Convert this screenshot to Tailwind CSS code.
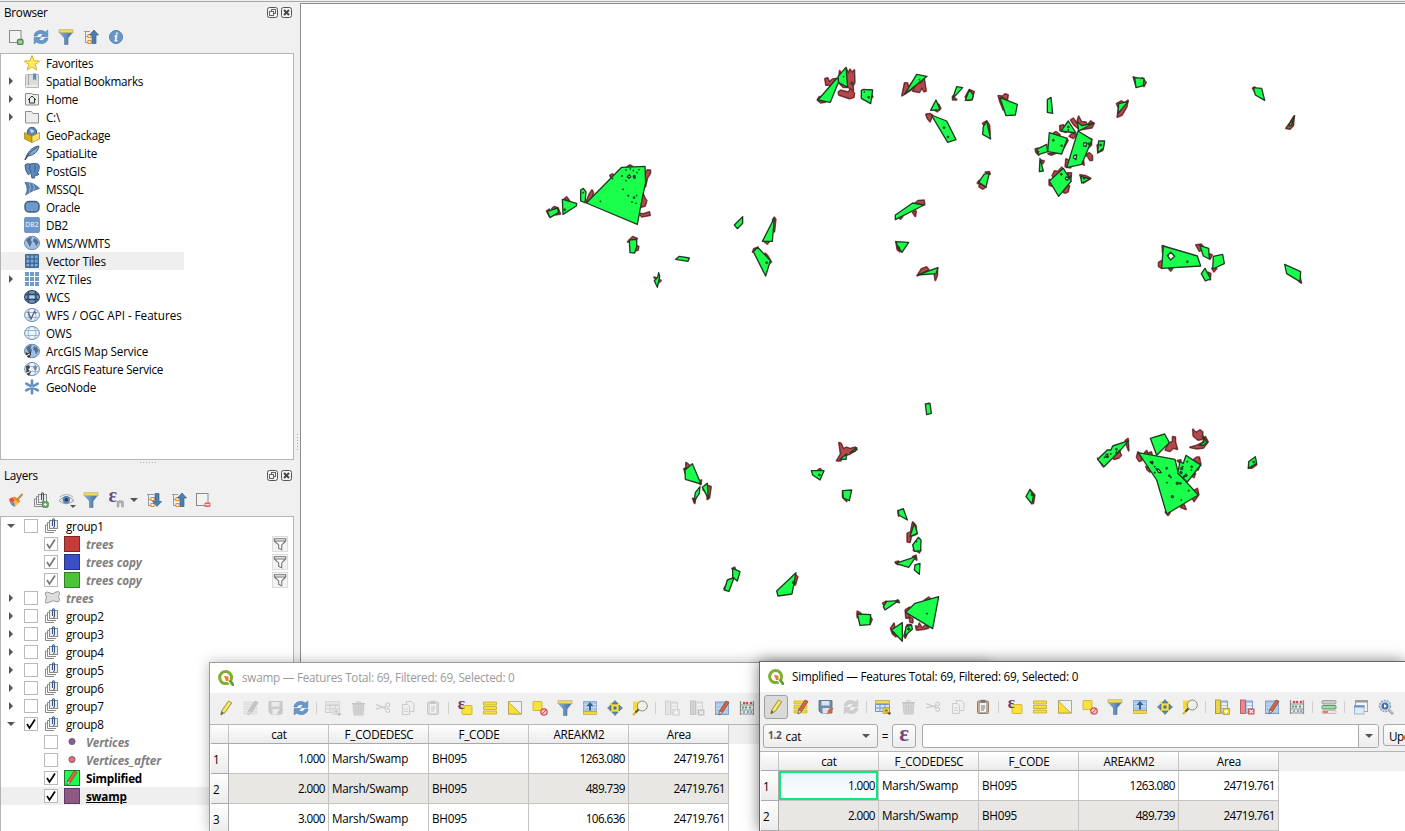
<!DOCTYPE html>
<html lang="en">
<head>
<meta charset="utf-8">
<title>Swamp layers</title>
<script src="https://cdn.jsdelivr.net/npm/@tailwindcss/browser@4"></script>
</head>
<body class="overflow-hidden bg-[#f0f0f0] text-black font-['Open_Sans','Noto_Sans',sans-serif] text-[11.7px] tracking-[-0.24px] leading-[18px]">
<svg class="absolute size-0" aria-hidden="true">
  <defs>
    <linearGradient id="gf" x1="0" x2="1"><stop offset="0" stop-color="#8db3de"/><stop offset="1" stop-color="#3c6798"/></linearGradient>
  </defs>
</svg>
<svg class="hidden" aria-hidden="true">
  <symbol id="addlayer" viewBox="0 0 16 16"><rect x="1.500" y="1.500" width="11.500" height="12" fill="#f3f3f3" stroke="#8a8a8a"/><rect x="9.500" y="10.500" width="5.500" height="5" rx="1.500" fill="#a5cda3" stroke="#4b8a4a" stroke-width="1.300"/></symbol>
  <symbol id="refresh" viewBox="0 0 16 16"><path d="M1 7C1.500 1.500 8 0 12.500 3L14.800 1v6.500H8L10.200 5.200C7.500 3.700 5 4.500 4 7Z" fill="#6697cd" stroke="#4b7db5" stroke-width=".6"/><path d="M15 9C14.500 14.500 8 16 3.500 13L1.200 15V8.500H8L5.800 10.800C8.500 12.300 11 11.500 12 9Z" fill="#6697cd" stroke="#4b7db5" stroke-width=".6"/></symbol>
  <symbol id="funnel" viewBox="0 0 16 16"><path d="M1.500 3.500h13L10 9v6.500H6.500V9Z" fill="url(#gf)" stroke="#587fa9" stroke-width=".7"/><rect x="1" y=".8" width="14" height="3" fill="#f4dc4c" stroke="#aaa06a" stroke-width=".6"/></symbol>
  <symbol id="collapse" viewBox="0 0 16 16"><path d="M1 2.500h6M2.500 2.500V14M2.500 7.500H5M2.500 13.500H5" stroke="#999" fill="none"/><rect x="5" y="5.500" width="3" height="3" fill="#fff" stroke="#f08a1c"/><rect x="5" y="11.500" width="3" height="3" fill="#fff" stroke="#f08a1c"/><path d="M11 1l4.500 5H13v8.500H9V6H6.500Z" fill="#4d7eb3" stroke="#365f8d" stroke-width=".7"/></symbol>
  <symbol id="expand" viewBox="0 0 16 16"><path d="M1 2.500h7M2.500 2.500V14M2.500 7.500H5M2.500 13.500H5" stroke="#999" fill="none"/><rect x="5" y="5.500" width="3" height="3" fill="#fff" stroke="#f08a1c"/><rect x="5" y="11.500" width="3" height="3" fill="#fff" stroke="#f08a1c"/><path d="M11 14.500l4.500-5H13V1.500H9v8H6.500Z" fill="#4d7eb3" stroke="#365f8d" stroke-width=".7"/></symbol>
  <symbol id="info" viewBox="0 0 16 16"><circle cx="8" cy="8" r="6.500" fill="#6b96c8" stroke="#4f7fb5"/><path d="M8.900 3.600v1.800M6.600 7h1.900l-1 4.800h1.900" stroke="#fff" stroke-width="1.600" fill="none"/></symbol>
  <symbol id="float" viewBox="0 0 11 11"><rect x=".5" y=".5" width="10" height="10" rx="2" fill="#f4f4f4" stroke="#555"/><rect x="4.500" y="2.500" width="4" height="4" fill="none" stroke="#666"/><rect x="2.500" y="4.500" width="4" height="4" fill="#f4f4f4" stroke="#666"/></symbol>
  <symbol id="close" viewBox="0 0 11 11"><rect x=".5" y=".5" width="10" height="10" rx="2" fill="#f4f4f4" stroke="#555"/><path d="M3 3l5 5M8 3l-5 5" stroke="#444" stroke-width="1.900"/></symbol>

  <symbol id="star" viewBox="0 0 16 16"><path d="M8 .5l2 5.300 5.700.2-4.500 3.500 1.600 5.600L8 11.900l-4.800 3.200 1.600-5.600L.300 6 6 5.800Z" fill="#fdec60" stroke="#d2ab20" stroke-width=".9"/></symbol>
  <symbol id="book" viewBox="0 0 16 16"><path d="M1.500 2.500q0-1 1-1h12v13h-12q-1 0-1-1Z" fill="#dcdcdc" stroke="#b4b4b4"/><path d="M4.500 1.500v11" stroke="#aaa"/><path d="M2 13h12" stroke="#fff"/><path d="M9 .5h3.200v7L10.600 6 9 7.500Z" fill="#5b8cc2"/></symbol>
  <symbol id="folder" viewBox="0 0 16 16"><path d="M1.500 13.500v-11h6l1.500 2h5.500v9.500h-13Z" fill="#ededed" stroke="#8c8c8c"/></symbol>
  <symbol id="home" viewBox="0 0 16 16"><path d="M1.500 13.500v-11h6l1.500 1h5.500v10.500h-13Z" fill="#ededed" stroke="#8c8c8c"/><path d="M4 9l4-4 4 4M5.500 8v4h5V8" fill="none" stroke="#333"/></symbol>
  <symbol id="gpkg" viewBox="0 0 16 16"><circle cx="8" cy="5" r="4.700" fill="#5f87b6" stroke="#35577c"/><path d="M6 2l3 1 1 2-3 1Z" fill="#d0dfef"/><path d="M.500 5.500L8 9v6.500L.5 12Z" fill="#d6aa08" stroke="#8c7418" stroke-width=".6"/><path d="M15.500 5.500L8 9v6.500l7.500-3.500Z" fill="#fae56a" stroke="#8c7418" stroke-width=".6"/></symbol>
  <symbol id="feather" viewBox="0 0 16 16"><path d="M1 15C3 8 7 2 15 1c-1 6-5 9-11 10Z" fill="#86a9d2" stroke="#2d4a6e" stroke-width=".9"/><path d="M1 15C4 9 8 5 13 2.500" stroke="#2d4a6e" fill="none"/></symbol>
  <symbol id="postgis" viewBox="0 0 16 16"><path d="M1 2Q2.500 0 6 1q4-1.200 8 0 2.200 1.500 1 5.500-.5 3-2.500 4l2.500.5q-1.500 2-4 1.200L10.500 15H7.800L7 9.500 4.500 12Q1 8 1 2Z" fill="#5e8cbf" stroke="#36577f" stroke-width=".9"/><path d="M6.500 2q-2 4 .5 7M10.500 2q2 4-.5 7.500" stroke="#36577f" fill="none" stroke-width=".8"/></symbol>
  <symbol id="mssql" viewBox="0 0 16 16"><path d="M1 1.500Q10 1 15.500 7.500 9 9 1.500 14 5 8 1 1.500Z" fill="#5781b1" stroke="#3b608c" stroke-width=".7"/><path d="M5 2q3 4 0 10M9 3q3 4 0 7" stroke="#b8cfe8" fill="none" stroke-width=".7"/></symbol>
  <symbol id="oracle" viewBox="0 0 16 16"><rect x="1" y="2.500" width="14" height="10.500" rx="4" fill="#6e9acb" stroke="#3d5e83" stroke-width="1.500"/></symbol>
  <symbol id="db2" viewBox="0 0 16 16"><rect width="16" height="16" rx="2" fill="#6d97ca"/><text x="8" y="10" text-anchor="middle" font-size="6.500" letter-spacing="0.300" fill="#fff" font-family="Open Sans">DB2</text></symbol>
  <symbol id="globe" viewBox="0 0 16 16"><ellipse cx="8" cy="8" rx="7.500" ry="6.700" fill="#9fc0e4" stroke="#5f7d9f" stroke-width=".9"/><path d="M2 5q3-3.500 6-2.500L6.500 5 8 7l-2 5-2-3.500ZM10 3l3 1.500 1.500 3-2.500 4-1-3.500-2-1.500Z" fill="#536f90"/></symbol>
  <symbol id="vtile" viewBox="0 0 16 16"><rect x="1" y="1" width="14" height="14" rx="1" fill="#3f6895"/><path d="M2.500 2.500h2.700v2.700H2.500zM6.700 2.500h2.700v2.700H6.700zM10.900 2.500h2.700v2.700h-2.700zM2.500 6.700h2.700v2.700H2.500zM6.700 6.700h2.700v2.700H6.700zM10.900 6.700h2.700v2.700h-2.700zM2.500 10.900h2.700v2.700H2.500zM6.700 10.900h2.700v2.700H6.700zM10.900 10.900h2.700v2.700h-2.700z" fill="#80abda"/></symbol>
  <symbol id="xyz" viewBox="0 0 16 16"><path d="M1 1h4v4H1zM6 1h4v4H6zM11 1h4v4h-4zM1 6h4v4H1zM6 6h4v4H6zM11 6h4v4h-4zM1 11h4v4H1zM6 11h4v4H6zM11 11h4v4h-4z" fill="#6f9bcb"/></symbol>
  <symbol id="wcs" viewBox="0 0 16 16"><ellipse cx="8" cy="8" rx="7.500" ry="6.500" fill="#6f96c4" stroke="#31465f"/><path d="M1 5.500h14M1 10.500h14M5 2q-2 6 0 12M11 2q2 6 0 12" stroke="#31465f" stroke-width="1.300" fill="none"/><rect x="5.500" y="6.500" width="5" height="3" fill="#b6d0ee"/></symbol>
  <symbol id="ows" viewBox="0 0 16 16"><ellipse cx="8" cy="8" rx="7.400" ry="6.500" fill="#eef5fd" stroke="#6389b4"/><path d="M1 5.500h14M1 10.500h14M5.500 2q-3 6 0 12M10.500 2q3 6 0 12" stroke="#8fb1d8" fill="none" stroke-width=".9"/></symbol>
  <symbol id="wfs" viewBox="0 0 16 16"><use href="#ows"/><path d="M4 4.500L7 12l3.500-7.500 1.500 2" stroke="#5f666e" stroke-width="1.400" fill="none"/></symbol>
  <symbol id="arcmap" viewBox="0 0 16 16"><use href="#globe"/><path d="M1.500 9l3 1.500L7 8v3.500L5 15 2.500 13Z" fill="#333"/><path d="M2 13l4-2" stroke="#fff"/></symbol>
  <symbol id="arcfeat" viewBox="0 0 16 16"><use href="#ows"/><path d="M9 6l3-2 1 3-2 3Z" fill="#72859c"/><path d="M2 5l3-1 1 3-2 1 3 3-2 4-2.500-2Z" fill="#444"/><path d="M2 12.500l4-2" stroke="#fff"/></symbol>
  <symbol id="geonode" viewBox="0 0 16 16"><path d="M8 1.700v12.600M2.300 4.600l11.400 6.800M13.700 4.600L2.300 11.400" stroke="#6490c0" stroke-width="2.700" stroke-linecap="round"/><circle cx="8" cy="8" r="1" fill="#a9c5e5"/></symbol>

  <symbol id="brush" viewBox="0 0 16 16"><path d="M1 7.500l5-3 6 5-5 5.500Q2.500 13.500 1 7.500Z" fill="#f3c53a"/><path d="M1 7l4-2 1.500 4-4 2Z" fill="#e2524a"/><path d="M2.500 11l3.500-1 1 4.500q-3 0-4.500-3.500Z" fill="#5d8ad0"/><path d="M6 5.500l5.500 4.500" stroke="#e58d2c" stroke-width="2.500"/><path d="M9 8l5.500-6" stroke="#c28846" stroke-width="2"/></symbol>
  <symbol id="group" viewBox="0 0 16 16"><path d="M1.500 7v7.500H10M1.500 7H3M3.500 4.500v8H12M3.500 4.500H5" fill="none" stroke="#8a8a8a"/><rect x="5.500" y="2.500" width="8" height="8" fill="#eee" stroke="#8a8a8a"/><path d="M8.500 8V2.500q0-1.700 1-1.700t1 1.700V8q0 1.500-1.400 1.500" fill="none" stroke="#35577c" stroke-width="1.100"/></symbol>
  <symbol id="addgroup" viewBox="0 0 16 16"><use href="#group"/><rect x="9.500" y="9.800" width="5.700" height="5.500" rx="1" fill="#76ad75" stroke="#4b8a4a"/><path d="M12.300 11v3M10.800 12.500h3" stroke="#fff"/></symbol>
  <symbol id="eye" viewBox="0 0 18 16"><path d="M1 8.500Q8 1 16 8.500 8 15 1 8.500Z" fill="#eee" stroke="#999"/><path d="M2 5q6-5 13 0" fill="none" stroke="#aaa"/><circle cx="8.300" cy="7.700" r="3.700" fill="#5582b6"/><circle cx="8.300" cy="7.700" r="1.600" fill="#20374f"/><path d="M12 13h6l-3 3Z" fill="#555"/></symbol>
  <symbol id="epsf" viewBox="0 0 16 16"><text x="-.5" y="9.500" font-size="20" font-weight="bold" fill="#704c7d" font-family="Liberation Serif">ε</text><path d="M8 9.500q3.200-2 6.500 0V15h-2v-4h-2.500v4H8Z" fill="#b0b0b0" stroke="#999" stroke-width=".5"/></symbol>
  <symbol id="removelayer" viewBox="0 0 16 16"><rect x="1.500" y="1.500" width="11.500" height="12" fill="#f3f3f3" stroke="#8a8a8a"/><rect x="9.500" y="10.500" width="6" height="4.500" rx="1" fill="#ee5c61"/><path d="M10.500 12.700h4" stroke="#fff" stroke-width="1.200"/></symbol>
  <symbol id="poly" viewBox="0 0 16 16"><path d="M1 3q2-2 5 0t6-1q3-1 3.500.5 0 2-1 4l1 3.500q-1 3-3.500 1.500t-5 0-5 1.500q-1.500-1-.500-2.500l1-3.500Z" fill="#ddd" stroke="#999"/></symbol>
  <symbol id="gfilter" viewBox="0 0 16 16"><path d="M1.500 2h13v2.500L10 9v5.500l-3.500-1.500V9L1.500 4.500ZM2 4.500h12" fill="#fafafa" stroke="#707070" stroke-width="1.200"/></symbol>

  <symbol id="qgis" viewBox="0 0 16 16"><circle cx="7.600" cy="7.600" r="6" fill="none" stroke="#7fae32" stroke-width="3"/><path d="M7 7.500L9.500 6.500l1 2 5 5-2.500 2.200-4.500-5Z" fill="#fff"/><path d="M10.500 11l2-1.500 3.500 4V16h-2Z" fill="#669c30"/><path d="M6 6l4.500.5v4.500H8Z" fill="#ef7b22"/></symbol>
  <symbol id="pencil" viewBox="0 0 16 16"><path d="M2.800 15l1-4.500L10.500 1l3.300 1.800L7.200 12.500Z" fill="#edda50" stroke="#9c8b3c" stroke-width=".9"/><path d="M5.500 11.500L12 2" stroke="#fff3a0"/><path d="M2.800 15l.8-3.500 2 1.300Z" fill="#555"/></symbol>
  <symbol id="rpencil" viewBox="0 0 16 16"><path d="M5 15l.5-4L12 1l3 1.500L8.500 12.500Z" fill="#d9643b" stroke="#7d5342" stroke-width=".8"/><path d="M5 15l.5-4 3 1.500Z" fill="#e8ddd0" stroke="#555" stroke-width=".5"/></symbol>
  <symbol id="multi" viewBox="0 0 16 16"><path d="M1 2h13v3H1zM1 6.500h13v3H1zM1 11h13v3H1z" fill="#f4d933" stroke="#c3a92a" stroke-width=".6"/><use href="#rpencil"/></symbol>
  <symbol id="save" viewBox="0 0 16 16"><path d="M1 1.500h13v12.500H3L1 12Z" fill="#6d8caf" stroke="#4d6a87" stroke-width=".8"/><path d="M3.500 2h8v4.500h-8zM4.500 9h7v5h-7z" fill="#d9e3ec"/><path d="M9 15.500l1-4L13.500 8l2 1.500-3.500 4.500Z" fill="#d9643b"/></symbol>
  <symbol id="addrow" viewBox="0 0 16 16"><path d="M.5 1.500h14v3H.5z" fill="#f3da50" stroke="#a99a4c" stroke-width=".7"/><path d="M.500 5.500h14v7H.5zM.5 9h14M5 5.500v7M10 5.500v7" fill="#dce8f6" stroke="#6d98cb"/><rect x="8" y="9" width="6.500" height="5.500" fill="#f4d933" stroke="#a28a21" stroke-width=".6"/><path d="M11.200 10v3.500M9.500 11.700h3.500" stroke="#8b761b"/><path d="M12 13.500h4.500l-2.200 2.500Z" fill="#444"/></symbol>
  <symbol id="trash" viewBox="0 0 16 16"><path d="M3 4.500h11l-1 10.500H4Z" fill="#d59a97" stroke="#a66" stroke-width=".9"/><path d="M2 3.500h13M6 2h5M6 6v7.500M8.500 6v7.500M11 6v7.500" stroke="#a66"/></symbol>
  <symbol id="cut" viewBox="0 0 16 16"><path d="M1 4.500L11 8.500M1 9l10-2.500" stroke="#777" stroke-width="1.200"/><circle cx="12.700" cy="5" r="2" fill="none" stroke="#777"/><circle cx="12.700" cy="10.500" r="2" fill="none" stroke="#777"/></symbol>
  <symbol id="copy" viewBox="0 0 16 16"><path d="M6.500 1.500h5l2.500 2.500v7.500H6.500Z" fill="#eee" stroke="#888"/><path d="M2.500 4.500h5l2 2V14.500h-7Z" fill="#eee" stroke="#888"/><path d="M4 9h4M4 11.500h4" stroke="#999"/></symbol>
  <symbol id="paste" viewBox="0 0 16 16"><rect x="2.500" y="2" width="11" height="12.500" rx="1" fill="#c9ad8c" stroke="#97806a"/><rect x="4.500" y="3.500" width="7" height="10" fill="#f3f3f3" stroke="#888" stroke-width=".5"/><rect x="5.500" y=".8" width="5" height="3" fill="#777"/><path d="M6 7h4M6 9h4M6 11h3" stroke="#777"/></symbol>
  <symbol id="epssel" viewBox="0 0 16 16"><rect x="5" y="5.500" width="10" height="9" rx="1" fill="#fae238" stroke="#c4a824" stroke-width=".8"/><text x=".8" y="9" font-size="17" font-weight="bold" fill="#634070" font-family="Liberation Serif">ε</text></symbol>
  <symbol id="selall" viewBox="0 0 16 16"><path d="M1.500 2h13v3h-13zM1.500 6.500h13v3h-13zM1.500 11h13v3h-13z" fill="#f7df3b" stroke="#c5aa28" stroke-width=".8"/></symbol>
  <symbol id="invert" viewBox="0 0 16 16"><rect x="1.500" y="1.500" width="13" height="12.500" fill="#f1f1f1" stroke="#aaa"/><path d="M1.500 2v12H14Z" fill="#f8df3d" stroke="#b69e30" stroke-width=".8"/></symbol>
  <symbol id="desel" viewBox="0 0 16 16"><rect x="1" y="1.500" width="9" height="9" rx=".5" fill="#fae238" stroke="#c7ab28" stroke-width=".8"/><circle cx="12" cy="12" r="3.200" fill="#f7c8c8" stroke="#d8494d" stroke-width="1.200"/><path d="M9.800 14.200l4.400-4.400" stroke="#d8494d"/></symbol>
  <symbol id="totop" viewBox="0 0 16 16"><path d="M1.500 1.500h13v10h-13z" fill="#a9c7e9" stroke="#7ba0cb" stroke-width=".8"/><path d="M1.500 4.500h13M1.500 7.500h13" stroke="#cfe0f3" stroke-width=".7"/><rect x="1.500" y="11.500" width="13" height="3" fill="#f3da3b" stroke="#b59d31" stroke-width=".6"/><path d="M8 2l3.500 4H9v4.500H7V6H4.500Z" fill="#34618f"/></symbol>
  <symbol id="pan" viewBox="0 0 16 16"><rect x="2.500" y="2.500" width="10" height="10" rx="1" fill="#f9e13c"/><path d="M8 .500l3 3.500H5ZM8 15.500l3-3.500H5ZM.5 8L4 5v6ZM15.500 8L12 5v6Z" fill="#5f88b5" stroke="#3f658e" stroke-width=".6"/><rect x="6.500" y="6.500" width="3" height="3" fill="#44709e"/></symbol>
  <symbol id="zoomsel" viewBox="0 0 16 16"><rect x="1" y="1.500" width="7" height="9" fill="#f5da35"/><path d="M1 15l3-3" stroke="#d8b92a" stroke-width="2.400"/><path d="M3.500 12.500l3.500-3.500" stroke="#554a39" stroke-width="2"/><circle cx="10.300" cy="6" r="5" fill="#eef0ea" stroke="#8c8c82"/></symbol>
  <symbol id="field" viewBox="0 0 16 16"><path d="M1.500 2h12v12h-12z" fill="#a9c7e9" stroke="#79a0cc"/><path d="M8 5h5M8 8h5M8 11h5" stroke="#fff" stroke-width="1.300"/><rect x="1.500" y="1" width="5" height="13.500" fill="#ecd447" stroke="#a59038" stroke-width=".8"/></symbol>
  <symbol id="newfield" viewBox="0 0 16 16"><use href="#field"/><rect x="9" y="9.500" width="6.500" height="6" fill="#eccd2b" stroke="#a28a21" stroke-width=".6"/><path d="M12.200 10.500v4M10.200 12.500h4" stroke="#fff" stroke-width="1.300"/></symbol>
  <symbol id="delfield" viewBox="0 0 16 16"><path d="M1.500 2h12v12h-12z" fill="#a9c7e9" stroke="#79a0cc"/><path d="M8 5h5M8 8h5" stroke="#fff" stroke-width="1.300"/><rect x="1.500" y="1" width="5" height="13.500" fill="#e9888a" stroke="#bc5558" stroke-width=".8"/><rect x="9" y="9.500" width="6.500" height="6" fill="#dc5357"/><path d="M10.500 11l3.500 3M14 11l-3.500 3" stroke="#fff" stroke-width="1.200"/></symbol>
  <symbol id="orgfield" viewBox="0 0 16 16"><rect x="1.500" y="2" width="13" height="12.500" fill="#a9c7e9" stroke="#79a0cc"/><path d="M1.500 5h13M1.500 8.500h13M1.500 12h13" stroke="#c9dcf1" stroke-width=".7"/><use href="#rpencil"/></symbol>
  <symbol id="abacus" viewBox="0 0 16 16"><path d="M1.500 1v14M14.500 1v14M1 5h14M1 10h14M1 14h14" stroke="#8b8d90" stroke-width="1.200"/><g fill="#d9484c"><circle cx="5" cy="3" r="1.300"/><circle cx="8" cy="3" r="1.300"/><circle cx="12" cy="3" r="1.300"/></g><g fill="#59a673"><circle cx="4" cy="7.500" r="1.200"/><circle cx="7" cy="7.500" r="1.200"/><circle cx="11" cy="7.500" r="1.200"/></g><g fill="#6c93c1"><circle cx="5" cy="12" r="1.100"/><circle cx="9" cy="12" r="1.100"/><circle cx="12" cy="12" r="1.100"/></g></symbol>
  <symbol id="cond" viewBox="0 0 16 16"><rect x="1" y="1.500" width="14" height="3.500" rx="1" fill="#ccc" stroke="#888" stroke-width=".7"/><rect x="1" y="6.500" width="14" height="3.500" rx="1" fill="#a5d8a8" stroke="#4d8b51" stroke-width=".9"/><rect x="1" y="11.500" width="14" height="3" rx="1" fill="#f6e0e0" stroke="#999" stroke-width=".5"/><path d="M2 13h5" stroke="#d44" stroke-width="1.300"/></symbol>
  <symbol id="dock" viewBox="0 0 16 16"><rect x="2.500" y="1.500" width="12" height="11" fill="#f4f4f4" stroke="#a5a5a5"/><path d="M2 2.500h13" stroke="#999" stroke-width="2"/><rect x="1.500" y="6.500" width="9.500" height="8.500" fill="#dfeaf7" stroke="#9db8d8"/><path d="M1 7.500h10.500" stroke="#6a94c4" stroke-width="2"/></symbol>
  <symbol id="actions" viewBox="0 0 16 16"><circle cx="7" cy="7" r="5.500" fill="#d3e0ee" stroke="#8ea4bd" stroke-width="1.500" stroke-dasharray="2 1"/><circle cx="7" cy="7" r="3.500" fill="#3e6fa6"/><path d="M6 5l3 2-3 2Z" fill="#fff"/><path d="M10.500 10.500l4.500 4.500" stroke="#999" stroke-width="2.500"/><path d="M11 10.500l3.500 3.500" stroke="#eee"/></symbol>
</svg>

<main class="relative flex h-[831px] w-[1405px] flex-col overflow-hidden">
  <div class="h-[2px] shrink-0 border-b border-[#a8a8a8]"></div>
  <div class="flex min-h-0 flex-1">
    <aside class="flex w-[300px] shrink-0 flex-col">
      <header class="flex h-[21px] shrink-0 items-center pb-px pl-1 pr-2"><h2 class="flex-1">Browser</h2><svg class="mr-[3px] size-[11px]"><use href="#float"/></svg><svg class="size-[11px]"><use href="#close"/></svg></header>
      <div class="flex h-[30px] shrink-0 items-center gap-[9px] pb-[2px] pl-2">
        <svg class="size-4"><use href="#addlayer"/></svg><svg class="size-4"><use href="#refresh"/></svg><svg class="size-4"><use href="#funnel"/></svg><svg class="size-4"><use href="#collapse"/></svg><svg class="size-4"><use href="#info"/></svg>
      </div>
      <ul id="browser" class="h-[407px] w-[294px] shrink-0 border border-[#b4b4b4] bg-white"></ul>
      <div class="flex h-[7px] shrink-0 items-start justify-center pt-[2px] pr-1"><i class="h-px w-[16px] bg-[repeating-linear-gradient(90deg,#aaa_0_1px,transparent_1px_3px)]"></i></div>
      <header class="flex h-[18px] shrink-0 items-center pb-px pl-1 pr-2"><h2 class="flex-1 pb-px">Layers</h2><svg class="mr-[3px] size-[11px]"><use href="#float"/></svg><svg class="size-[11px]"><use href="#close"/></svg></header>
      <div class="flex h-[31px] shrink-0 items-center gap-[9px] pb-[2px] pl-2">
        <svg class="size-4"><use href="#brush"/></svg><svg class="size-4"><use href="#addgroup"/></svg><svg class="-mr-[2px] h-4 w-[18px]"><use href="#eye"/></svg><svg class="size-4"><use href="#funnel"/></svg><svg class="ml-px size-4"><use href="#epsf"/></svg><i class="-ml-1 -mr-px h-0 w-0 border-x-4 border-t-4 border-x-transparent border-t-[#555]"></i><svg class="size-4"><use href="#expand"/></svg><svg class="size-4"><use href="#collapse"/></svg><svg class="-ml-px size-4"><use href="#removelayer"/></svg>
      </div>
      <ul id="layers" class="w-[294px] flex-1 border border-b-0 border-[#b4b4b4] bg-white"></ul>
    </aside>
    <section class="mt-px min-w-0 flex-1 overflow-hidden border-l border-t border-[#8c8c8c] bg-white">
      <svg id="map" class="block h-[827px] w-[1104px]" viewBox="301 4 1104 827"></svg>
    </section>
  </div>
  <div class="absolute left-[297px] top-[434px] h-[16px] w-px bg-[repeating-linear-gradient(180deg,#aaa_0_1px,transparent_1px_3px)]"></div>

  <section class="absolute left-[209px] top-[662px] h-[169px] w-[780px] overflow-hidden border border-b-0 border-[#9b9b9b] bg-white shadow-[0_0_12px_rgba(0,0,0,0.28)]">
    <header class="flex h-[30px] items-center gap-2 pb-px pl-2 text-[#9a9a9a]"><svg class="size-4"><use href="#qgis"/></svg><span class="pb-px">swamp — Features Total: 69, Filtered: 69, Selected: 0</span></header>
    <div id="tb1" class="flex h-[31px] items-center bg-[#f0f0f0] pb-px pl-[3px]"></div>
    <div id="t1" class="bg-white"></div>
  </section>

  <section class="absolute left-[759px] top-[661px] h-[170px] w-[646px] overflow-hidden border border-b-0 border-r-0 border-[#666] bg-white shadow-[0_0_14px_rgba(0,0,0,0.5)]">
    <header class="flex h-[30px] items-center gap-2 pb-px pl-2"><svg class="size-4"><use href="#qgis"/></svg><span class="pb-px">Simplified — Features Total: 69, Filtered: 69, Selected: 0</span></header>
    <div id="tb2" class="flex h-[31px] items-center bg-[#f0f0f0] pb-px pl-[3px]"></div>
    <div class="flex h-[28px] items-start bg-[#f0f0f0] pl-[3px] pt-px">
      <div class="flex h-6 w-[115px] shrink-0 items-center rounded-[3px] border border-[#a9a9a9] bg-linear-to-b from-[#fcfcfc] to-[#ededed] pl-1"><b class="mb-[2px] mr-1 text-[10px] text-[#555]">1.2</b><span class="flex-1">cat</span><i class="mr-[7px] h-0 w-0 border-x-4 border-t-4 border-x-transparent border-t-[#555]"></i></div>
      <span class="w-[14px] shrink-0 pt-[3px] text-center">=</span>
      <div class="flex h-6 w-6 shrink-0 items-center justify-center rounded-[3px] border border-[#a9a9a9] bg-linear-to-b from-[#fcfcfc] to-[#ededed] pb-1 font-['Liberation_Serif',serif] text-[23px] font-bold text-[#704c7d]">ε</div>
      <div class="ml-[6px] flex h-6 w-[457px] shrink-0 justify-end rounded-[3px] border border-[#a9a9a9] bg-white"><span class="flex w-5 items-center justify-center rounded-r-[3px] border-l border-[#a9a9a9] bg-linear-to-b from-[#fcfcfc] to-[#ededed]"><i class="h-0 w-0 border-x-4 border-t-4 border-x-transparent border-t-[#555]"></i></span></div>
      <div class="ml-1 h-[22px] w-[70px] shrink-0 whitespace-nowrap rounded-[3px] border border-[#a9a9a9] bg-linear-to-b from-[#fcfcfc] to-[#ededed] pl-[5px] pt-[2px] tracking-[-0.5px]">Update All</div>
    </div>
    <div id="t2" class="bg-white"></div>
  </section>
</main>

<script>
const ic = (id, cls = 'size-4 shrink-0') => `<svg class="${cls}"><use href="#${id}"/></svg>`;
const right = '<i class="h-0 w-0 border-y-4 border-l-4 border-y-transparent border-l-[#555]"></i>';
const down = '<i class="h-0 w-0 border-x-4 border-t-4 border-x-transparent border-t-[#555]"></i>';

document.getElementById('browser').innerHTML = [
  ['star','Favorites'],['book','Spatial Bookmarks',1],['home','Home',1],['folder','C:\\',1],['gpkg','GeoPackage'],
  ['feather','SpatiaLite'],['postgis','PostGIS'],['mssql','MSSQL'],['oracle','Oracle'],['db2','DB2'],['globe','WMS/WMTS'],
  ['vtile','Vector Tiles'],['xyz','XYZ Tiles',1],['wcs','WCS'],['wfs','WFS / OGC API - Features',0,'tracking-[-0.03px]'],['ows','OWS'],
  ['arcmap','ArcGIS Map Service',0,'tracking-[-0.15px]'],['arcfeat','ArcGIS Feature Service'],['geonode','GeoNode']
].map(([i, t, a, c = '']) => `<li class="flex h-[18px] w-[183px] items-center whitespace-nowrap ${t === 'Vector Tiles' ? 'bg-[#efefef]' : ''}"><span class="flex w-[23px] shrink-0 justify-center pr-[3px]">${a ? right : ''}</span>${ic(i)}<span class="ml-[6px] ${c}">${t}</span></li>`).join('');

const box = (on, grey) => `<span class="flex size-[14px] shrink-0 items-center justify-center border border-[#b9b9b9] bg-white">${on ? `<svg class="size-[12px]" viewBox="0 0 12 12"><path d="M2 6l2.500 4L10 1.500" fill="none" stroke="${grey ? '#777' : '#000'}" stroke-width="1.700"/></svg>` : ''}</span>`;
const sw = (f, s) => `<svg class="size-4 shrink-0" viewBox="0 0 16 16"><rect x=".5" y=".5" width="15" height="15" fill="${f}" stroke="${s}"/></svg>`;
const dot = f => `<svg class="size-4 shrink-0" viewBox="0 0 16 16"><circle cx="8" cy="7.500" r="3.100" fill="${f}" stroke="#5a5a5a" stroke-width=".8"/></svg>`;
const G = 'italic font-bold text-[#808080] tracking-[-0.1px]';
document.getElementById('layers').innerHTML = [
  [0,'d',0,ic('group'),'group1',''],
  [1,'',2,sw('#c43c39','#7e2523'),'trees',G,1],[1,'',2,sw('#3a50c4','#25347e'),'trees copy',G,1],[1,'',2,sw('#4cc43a','#317e25'),'trees copy',G,1],
  [0,'r',0,ic('poly'),'trees',G],
  ...[2,3,4,5,6,7].map(n => [0,'r',0,ic('group'),'group' + n,'']),
  [0,'d',1,ic('group'),'group8',''],
  [1,'',0,dot('#8a5a9e'),'Vertices',G],[1,'',0,dot('#e9697f'),'Vertices_after',G],
  [1,'',1,'<svg class="size-4 shrink-0" viewBox="0 0 16 16"><rect x=".5" y=".5" width="15" height="15" fill="#1aff4b" stroke="#20722f"/><use href="#rpencil" width="16" height="16" x="-2"/></svg>','Simplified','font-bold'],
  [1,'',1,sw('#8d5a82','#5a3a70'),'swamp','font-bold underline']
].map(([lv, ar, ck, icon, t, c, f]) => `<li class="flex h-[18px] items-center whitespace-nowrap ${t === 'swamp' ? 'bg-[#efefef]' : ''}"><span class="flex w-[23px] shrink-0 justify-center pr-[3px]">${ar === 'd' ? down : ar === 'r' ? right : ''}</span>${lv ? '<span class="w-5 shrink-0"></span>' : ''}${box(ck, ck === 2)}<span class="w-[6px] shrink-0"></span>${icon}<span class="ml-[6px] ${c}">${t}</span>${f ? `<span class="ml-auto mr-[5px] flex size-4 items-center justify-center border border-[#dcdcdc] bg-[#f3f3f3]">${ic('gfilter','size-[14px] shrink-0')}</span>` : ''}</li>`).join('');

const slot = (id, off, sel) => `<span class="flex w-[25px] shrink-0 justify-center"><span class="flex size-6 items-center justify-center rounded-[3px] ${sel ? 'border border-[#a0a0a0] bg-[#dadada]' : ''}">${ic(id, off ? 'size-4 opacity-35 grayscale' : 'size-4')}</span></span>`;
const sep = '<span class="flex w-[7px] shrink-0 justify-center"><i class="h-3 w-px bg-[#cfcfcf]"></i></span>';
const bar = (edit) => slot('pencil', 0, edit) + slot('multi', !edit) + slot('save', !edit) + slot('refresh', edit) + sep +
  slot('addrow', !edit) + slot('trash', 1) + slot('cut', 1) + slot('copy', 1) + slot('paste', !edit) + sep +
  ['epssel','selall','invert','desel','funnel','totop','pan','zoomsel'].map(i => slot(i)).join('') + sep +
  slot('newfield', !edit) + slot('delfield', !edit) + slot('orgfield') + slot('abacus') +
  (edit ? sep + slot('cond') + sep + slot('dock') + slot('actions') : '');
document.getElementById('tb1').innerHTML = bar(false).replace('slot', 'slot');
document.getElementById('tb2').innerHTML = bar(true);

const heads = ['cat','F_CODEDESC','F_CODE','AREAKM2','Area'];
const data = [['1.000','Marsh/Swamp','BH095','1263.080','24719.761'],['2.000','Marsh/Swamp','BH095','489.739','24719.761'],['3.000','Marsh/Swamp','BH095','106.636','24719.761']];
const num = 'justify-end pr-[3px] tracking-[-0.55px]';
const table = (rows, sel) => `<div class="flex h-5 border-t border-[#b5b5b5] bg-[#f0f0f0] pl-px"><span class="w-[18px] border-b border-r border-b-[#a9a9a9] border-r-[#c4c4c4] bg-linear-to-b from-white to-[#ebebeb]"></span>${heads.map(h => `<span class="flex w-[100px] items-center justify-center border-b border-r border-b-[#a9a9a9] border-r-[#c4c4c4] bg-linear-to-b from-white to-[#ebebeb] pl-px">${h}</span>`).join('')}</div>` +
  data.slice(0, rows).map((r, i) => `<div class="flex h-[30px] pl-px"><span class="flex w-[18px] items-center border-b border-r border-[#a9a9a9] bg-linear-to-b from-white to-[#ebebeb] pl-[2px] pt-px">${i + 1}</span>${r.map((c, j) => `<span class="flex w-[100px] items-center border-b border-r border-[#c4c4c4] pb-px ${i % 2 ? 'bg-[#e8e7e3]' : 'bg-white'} ${j === 1 || j === 2 ? 'pl-[3px]' : num} ${sel && !i && !j ? 'bg-linear-to-b from-[#e8f3ff] to-white shadow-[inset_0_0_0_2px_#0dea78]' : ''}">${c}</span>`).join('')}</div>`).join('');
document.getElementById('t1').innerHTML = table(3, false);
document.getElementById('t2').innerHTML = table(2, true);

/* Map tiles: every tile has its own origin and is digitised at three units per screen pixel. */
const tiles = [
 {o:[530,50],
  r:['885,86 893,84 898,96 907,88 916,86 921,100 905,112 898,105 888,105','929,62 935,72 948,54 955,70 960,58 966,68 973,60 974,98 969,108 970,122 955,112 940,112 926,98','925,126 932,121 955,127 962,116 973,130 971,142 958,146 945,141 927,135','868,140 862,150 872,158 886,156 890,140','168,457 178,432 186,420 190,428 186,444','344,372 352,360 361,361 361,370 352,384 346,410','338,428 345,445 350,452 345,468 330,472','326,490 340,492 358,486 360,496 335,500','240,376 247,372 255,380 246,390','290,352 300,345 308,350','66,476 72,470 84,474 91,492 76,494','50,483 58,478 58,498','102,448 110,441 118,452','293,576 308,560 322,566','316,585 326,590 324,600 316,602','372,682 380,684 382,692','382,684 393,692 384,700','728,510 733,502 737,508 733,545','702,574 712,582 718,574','668,606 672,596 684,592','705,610 712,616 724,636 718,640','1022,130 1028,140 1022,148'],
  g:['864,150 921,84 928,90 901,157','924,80 948,52 953,112 926,98','994,122 1000,118 1028,120 1022,161 994,145','169,459 275,352 345,349 347,398 338,438 322,523','52,484 82,474 86,487 60,503','97,448 140,460 139,468 99,493','152,420 160,415 168,426 165,458 152,453','298,570 320,568 320,590 314,609 300,608','373,692 383,682 386,668 389,680 382,712','437,628 448,619 478,624 474,634','613,525 638,500 638,520 622,536','697,574 733,504 727,574','670,605 683,592 721,632 707,678'],
  h:['292,380 298,374 302,380 297,385','310,378 314,376 316,383 312,385'],
  d:[[288,360],[301,357],[310,362],[321,368],[327,359],[276,378,2],[279,418,2],[295,437,2],[312,443,3],[320,437],[306,456],[318,460],[211,454],[288,392],[941,80],[966,100,4],[1016,142,3],[1003,126],[159,428,2],[104,479,3],[710,638,3],[248,386]]},
 {o:[880,55],
  r:['66,122 74,84 82,84 86,98 95,84 100,100','98,108 112,84 124,84 132,68 138,108 132,110 126,98 118,112','138,178 150,176 158,182 150,200 142,190','158,162 172,170 182,160 176,148','355,122 366,124 370,165 360,140','366,126 375,117 384,120 382,134','218,124 218,134 230,134','256,126 262,136 276,134 282,110 268,104','308,205 320,198 328,210 330,240','540,212 550,210 558,232 540,226','572,195 580,190 590,205 596,184 604,200 618,202 622,212 632,198 642,206 636,218 600,224 582,210','515,238 528,230 540,240','504,296 514,300 528,294','548,285 560,262 556,252 564,256','568,244 576,235 590,240 580,250','558,312 556,335 572,338 566,316','612,302 628,294 637,302 637,316 630,316 622,302','600,322 612,330 610,316','620,250 634,252 634,270 626,278','466,282 474,280 476,300 468,292','484,316 492,318 488,326','517,362 524,348 534,350 545,337 550,346 522,370','562,354 574,354 572,374','508,374 508,390 518,394','550,412 556,396 568,392 564,410 556,414','600,360 616,362 632,370 610,384','292,384 298,376 298,396 308,402 318,396','316,352 328,350 330,358','104,446 114,437 132,436 134,449','98,472 108,468 106,484','56,488 62,492 68,484','48,560 52,584 60,590','112,662 124,642 140,636 146,644','162,652 172,640 172,660 166,676','710,146 724,138 734,144 744,136 740,156 726,180 712,186 716,160','760,66 770,70 768,92','788,70 798,82 792,94','1118,100 1124,96 1126,112','1218,220 1228,206 1242,184 1240,212 1230,222','847,572 856,576 848,592','836,622 848,616 846,640 836,634','866,640 872,648 878,640','948,570 964,568 974,580 958,588','986,596 996,600 990,612','996,640 1002,650 1010,640','984,652 992,656 990,674','1256,650 1264,684 1258,680','652,270 654,292 668,286 672,262'],
  g:['74,118 110,58 141,64','218,130 230,95 248,98 230,118','256,136 268,104 280,120 276,134','152,166 168,135 180,164','360,128 412,148 406,180 378,182','154,180 200,198 228,254 203,262','320,198 332,252 308,238 310,215','502,134 513,127 518,175 502,172','764,68 792,70 790,92 768,98','716,146 744,140 714,176','1120,98 1145,100 1154,136 1126,120','1244,182 1234,212 1226,212','543,228 565,198 588,234','592,200 606,212 642,204 596,228','508,233 562,250 545,297 503,290','594,228 636,254 605,328 560,338','470,283 500,268 503,290 475,299','480,310 490,348 478,350','656,258 674,258 670,280 653,294','550,340 574,378 536,424 508,378','602,364 630,372 605,384','296,382 312,358 328,354 318,396','46,480 98,444 132,450 46,494','48,560 86,562 66,592 52,572','112,660 174,638 168,656','850,573 952,603 962,633 845,640','960,572 986,580 988,612 970,603','1000,604 1028,598 1033,626 998,642','964,656 975,640 992,672 976,678','1214,628 1262,650 1260,680 1220,656'],
  h:['862,602 872,592 884,604 872,615','611,263 620,264 618,274 611,273','582,302 590,300 588,314 580,308','558,366 567,368 562,376 556,372'],
  d:[[192,218,3],[204,246,3],[545,272,3],[520,256,3],[565,216,3],[565,225,2],[544,358,3],[572,364,2],[626,266,3],[662,270,3],[922,620,3],[474,290,3],[612,370,3],[56,578,3],[864,602,2],[118,74],[785,70]]},
 {o:[670,390],
  r:['48,218 54,222 60,228 48,240','42,236 50,234 46,250','84,276 94,270 92,284','112,286 123,290 118,324 112,328','68,325 76,328 74,340','507,158 513,160 520,176 530,172 540,176 556,172 561,178 540,192 526,196 512,212 500,212 512,192','444,240 450,236 456,242','728,396 738,408 740,432 724,438 720,457 712,455 712,430 722,426','730,480 742,484 748,488 752,480','676,516 686,514 684,524','728,500 738,496 740,510','684,362 694,364 686,378','362,580 376,554 383,560 376,584 368,586','186,536 194,532 198,545','162,596 178,570 192,563','638,640 648,634 646,650','676,634 684,630 688,638','562,664 570,668 574,674 562,682','596,674 606,688 600,702','706,660 718,652 716,684 708,684','718,680 728,686 728,698 720,696','737,708 745,712 748,700 756,714 766,706 776,714 760,718 740,720','762,632 776,622 784,628','662,715 672,700 678,740 668,732','706,744 702,738 712,704 722,704','768,44 776,40','518,304 518,322 530,334'],
  g:['766,42 780,40 784,70 770,74','45,240 67,221 93,282 46,268','72,335 76,308 90,290 88,310','97,292 112,280 115,325','510,208 530,192 528,208','540,188 560,173 555,184','424,242 462,242 450,270 428,255','518,302 545,300 538,332 520,324','685,362 700,356 712,390 686,375','733,400 742,430 720,440','728,465 745,442 753,450 752,482 733,484','677,520 738,500 716,532','735,525 750,520 748,553 733,540','188,535 210,545 202,573 188,562','163,600 172,570 192,563 177,604','320,603 378,548 366,612 324,618','640,650 650,634 686,632 645,660','562,672 602,674 600,704 570,706','707,667 735,640 806,620 788,716','664,720 697,698 697,754','704,738 708,710 725,705 727,718'],
  h:[], d:[[371,578,4],[448,255,3],[771,671,2],[670,728,3],[716,717,4],[740,455],[46,236,2],[100,300,2]]},
 {o:[1010,420],
  r:['346,62 354,56 356,92 350,76','322,100 328,94 334,106 326,114 312,118 310,108','380,112 384,96 396,120 388,124','404,98 410,92 414,100 424,96 426,104','466,90 476,70 488,64 488,50 496,52 496,66 502,88 490,84 480,94','549,28 558,38 570,30 578,36 576,58 564,60 550,48','540,82 560,76 578,68 586,50 594,66 580,84 560,86','408,140 420,148 420,156 412,150','544,124 560,112 568,112 572,136 556,122','546,168 556,160 552,172','552,212 562,206 566,224 552,244 548,236','512,262 522,254 528,268','466,276 474,286 480,278','60,210 74,225 70,250','716,144 726,144 740,134','263,115 272,128 280,140','502,122 512,120 512,132','556,138 572,130 564,150'],
  g:['48,230 60,208 70,228 66,252','263,118 292,90 303,90 308,78 356,62 330,92 282,140','421,55 464,42 478,68 440,106','568,76 582,66 580,48 590,68 580,76','385,98 495,118 505,160 565,225 470,282 440,180','503,160 510,125 520,130 528,106 572,135 532,186','715,145 716,125 736,110 740,130'],
  h:['438,146 446,148 454,158 446,158','420,126 428,124 428,132','288,104 293,102 294,112 288,110'],
  d:[[426,128,3],[470,145,3],[434,140,2],[478,167,3],[483,172,2],[471,188,2],[502,190,4],[511,190,3],[487,230,4],[514,240,2],[515,146,4],[513,158,4],[528,166,4],[522,170,3],[545,140,3],[544,150,2],[518,140,2],[532,125,2],[292,110,3],[302,102,2],[319,88,3],[320,98,3],[328,94,3],[284,112,2],[731,126,3],[66,224,3],[536,212,2],[434,158,2]]}
];
const P = (a, f) => a.map(p => `<polygon points="${p}" fill="${f}"/>`).join('');
document.getElementById('map').innerHTML = tiles.map(t => `<g transform="translate(${t.o}) scale(.33333)" stroke-linejoin="round"><g stroke="#b5484b" stroke-width="6">${P(t.r, '#b5484b')}</g><g stroke="#4a3033" stroke-width="3">${P(t.r, '#b5484b')}</g><g stroke="#1e3b26" stroke-width="4">${P(t.g, '#1aff4b')}${P(t.h, '#fff')}</g>${t.d.map(([x, y, r = 1.6]) => `<circle cx="${x}" cy="${y}" r="${r}" fill="#1c5c2b" stroke="#182c1c" stroke-width="2"/>`).join('')}</g>`).join('');
</script>
</body>
</html>
